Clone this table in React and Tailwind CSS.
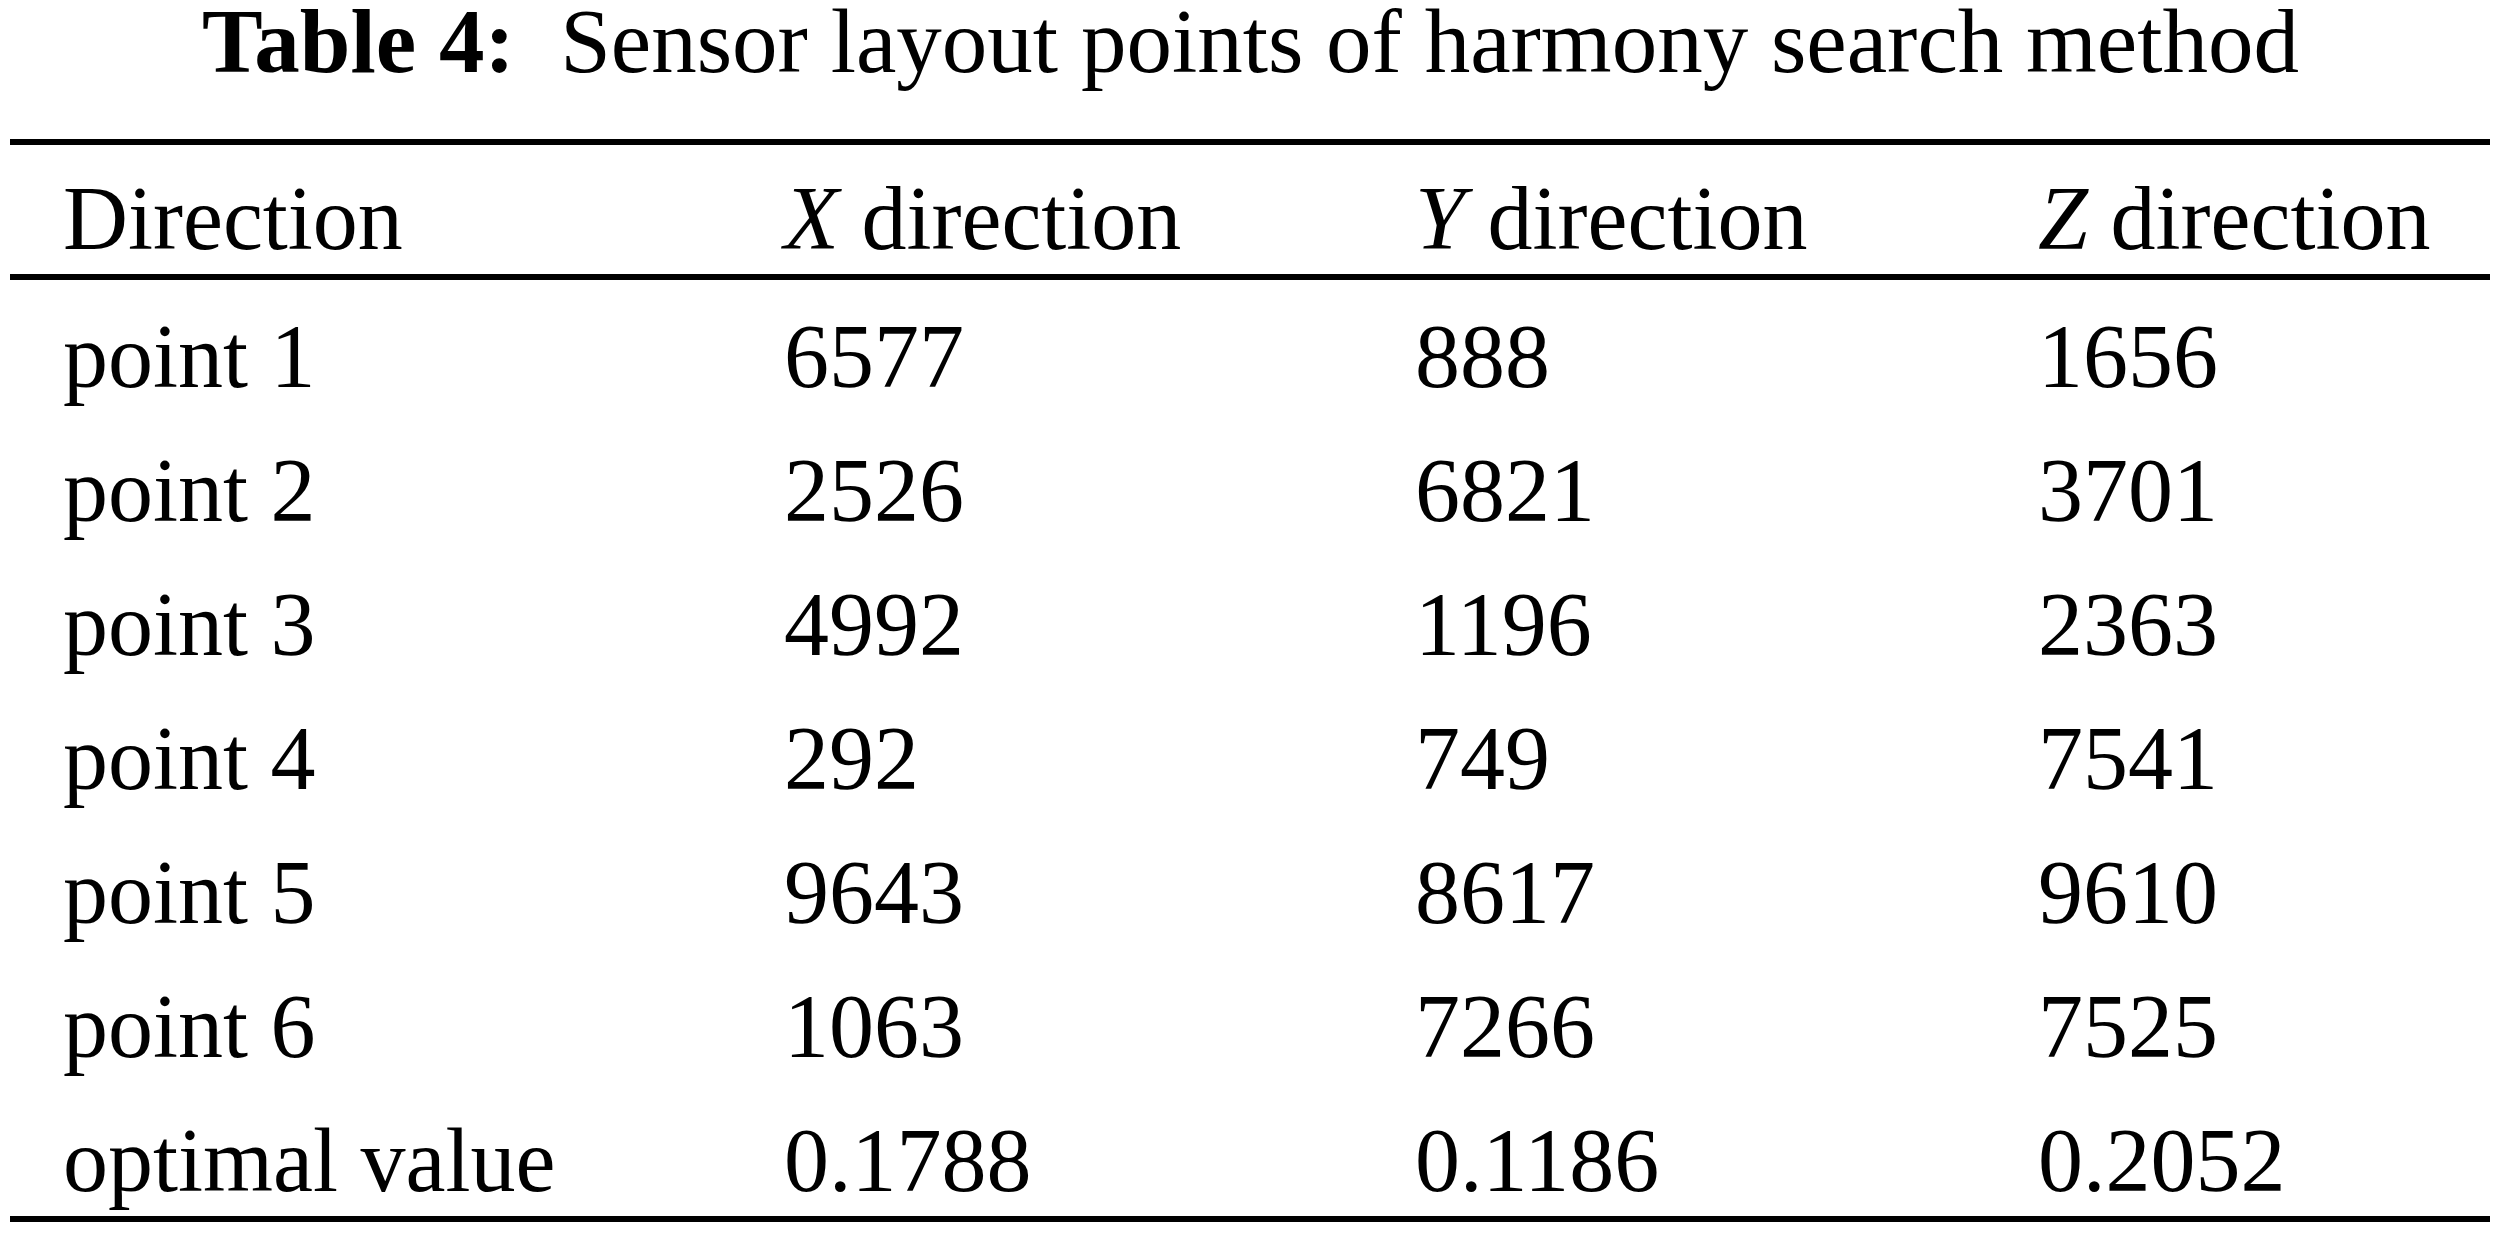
const header = ['Direction', 'X', 'Y', 'Z'];

const rows = [
  ['point 1', '6577', '888', '1656'],
  ['point 2', '2526', '6821', '3701'],
  ['point 3', '4992', '1196', '2363'],
  ['point 4', '292', '749', '7541'],
  ['point 5', '9643', '8617', '9610'],
  ['point 6', '1063', '7266', '7525'],
  ['optimal value', '0.1788', '0.1186', '0.2052'],
];

const rowGrid = 'grid grid-cols-[721px_631px_623px_1fr] pl-[53px]';

export default function App() {
  return (
    <div className="w-[2501px] h-[1233px] bg-white text-black font-['Liberation_Serif','Times_New_Roman',serif]">
      <div className="text-center text-[91px] leading-[84px] whitespace-pre">
        <span className="font-bold">Table 4:</span>
        {'  Sensor layout points of harmony search method'}
      </div>

      <div className="ml-[10px] w-[2480px] mt-[55px]">
        <div className="h-[6px] bg-black" />

        <div className={`${rowGrid} text-[90px] leading-[100px] pt-[24px] pb-[5px]`}>
          <div>{header[0]}</div>
          {header.slice(1).map((axis) => (
            <div key={axis}>
              <span className="italic">{axis}</span> direction
            </div>
          ))}
        </div>

        <div className="h-[6px] bg-black" />

        <div className="flex flex-col gap-[34px] pt-[27px] pb-[5px] text-[90px] leading-[100px]">
          {rows.map((row) => (
            <div key={row[0]} className={rowGrid}>
              {row.map((cell, i) => (
                <div key={i}>{cell}</div>
              ))}
            </div>
          ))}
        </div>

        <div className="h-[6px] bg-black" />
      </div>
    </div>
  );
}
